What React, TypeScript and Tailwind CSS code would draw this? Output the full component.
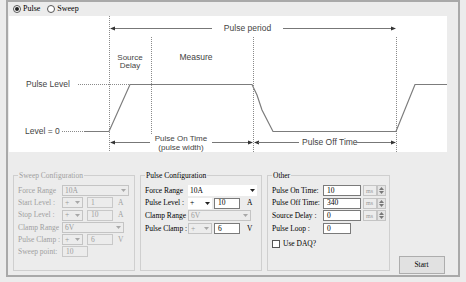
import clsx from 'clsx'

function Arrow({ disabled }: { disabled?: boolean }) {
  return (
    <svg width="5" height="3" viewBox="0 0 5 3" className="shrink-0">
      <polygon points="0,0 5,0 2.5,3" fill={disabled ? '#a8a8a8' : '#222'} />
    </svg>
  )
}

function Combo({ value, className, disabled, flat }: { value: string; className: string; disabled?: boolean; flat?: boolean }) {
  return (
    <div
      className={clsx(
        'h-[11px] flex items-center justify-between pl-[2px] pr-[2px] shrink-0',
        flat ? 'bg-white' : 'border border-[#c4c4c4]',
        disabled ? 'text-[#9a9a9a] bg-[#ececec]' : 'text-[#000]',
        className
      )}
    >
      <span className="leading-none">{value}</span>
      <Arrow disabled={disabled} />
    </div>
  )
}

function Field({ value, className, disabled }: { value: string; className: string; disabled?: boolean }) {
  return (
    <div
      className={clsx(
        'h-[11px] flex items-center pl-[3px] shrink-0 leading-none border',
        disabled ? 'bg-[#ececec] border-[#c8c8c8] text-[#a0a0a0]' : 'bg-white border-[#7a7a7a] text-[#000]',
        className
      )}
    >
      {value}
    </div>
  )
}

function Spinner() {
  return (
    <div className="w-[9px] h-[11px] border border-[#c4c4c4] bg-[#e4e4e4] flex flex-col items-center justify-center gap-[1px] shrink-0">
      <svg width="5" height="3" viewBox="0 0 5 3">
        <polygon points="0,3 5,3 2.5,0" fill="#777" />
      </svg>
      <svg width="5" height="3" viewBox="0 0 5 3">
        <polygon points="0,0 5,0 2.5,3" fill="#777" />
      </svg>
    </div>
  )
}

function Ms() {
  return (
    <div className="w-[14px] h-[11px] border border-[#c4c4c4] bg-[#ececec] text-[#9a9a9a] text-[6px] flex items-center pl-[2px] shrink-0 leading-none">
      ms
    </div>
  )
}

function Diagram() {
  const txt = { fontFamily: "'Liberation Sans', Arial, sans-serif", fontSize: 8.5, fill: '#444' }
  const small = { ...txt, fontSize: 8 }
  const dot = { stroke: '#8a8a8a', strokeWidth: 1, strokeDasharray: '1 1' }
  const wave = '#7c7c7c'
  return (
    <svg width="438" height="136" viewBox="9 16 438 136" className="block">
      <rect x="9" y="16" width="438" height="136" fill="#fff" />
      {/* dotted guides */}
      <line x1="109.5" y1="16" x2="109.5" y2="152" {...dot} />
      <line x1="151.5" y1="37" x2="151.5" y2="134" {...dot} />
      <line x1="253.5" y1="37" x2="253.5" y2="152" {...dot} />
      <line x1="396.5" y1="37" x2="396.5" y2="152" {...dot} />

      {/* pulse period */}
      <line x1="111" y1="28.5" x2="212" y2="28.5" stroke="#777" />
      <line x1="283" y1="28.5" x2="394" y2="28.5" stroke="#777" />
      <polygon points="110,28.5 115,26.5 115,30.5" fill="#333" />
      <polygon points="396,28.5 391,26.5 391,30.5" fill="#333" />
      <text x="247.5" y="31" textAnchor="middle" style={txt}>Pulse period</text>

      <text x="130" y="59.5" textAnchor="middle" style={small}>Source</text>
      <text x="130" y="68" textAnchor="middle" style={small}>Delay</text>
      <text x="196" y="60" textAnchor="middle" style={txt}>Measure</text>

      {/* levels */}
      <text x="26" y="87" style={txt}>Pulse Level</text>
      <line x1="78" y1="84.5" x2="129" y2="84.5" {...dot} />
      <text x="25" y="134" style={txt}>Level = 0</text>
      <line x1="62" y1="131.5" x2="84" y2="131.5" {...dot} />

      {/* waveform */}
      <polyline
        points="84,131.5 109,131.5 130,84.5 252,84.5 257,95 262,110 273,131.5 396,131.5 415,84.5 447,84.5"
        fill="none"
        stroke={wave}
        strokeWidth="1.2"
      />

      {/* pulse on / off */}
      <line x1="111" y1="142.5" x2="150" y2="142.5" stroke="#777" />
      <polygon points="110,142.5 115,140.5 115,144.5" fill="#333" />
      <line x1="212" y1="142.5" x2="250" y2="142.5" stroke="#777" />
      <polygon points="253,142.5 248,140.5 248,144.5" fill="#333" />
      <text x="181" y="140.5" textAnchor="middle" style={small}>Pulse On Time</text>
      <text x="181" y="149.5" textAnchor="middle" style={small}>(pulse width)</text>
      <polygon points="254,142.5 259,140.5 259,144.5" fill="#333" />
      <line x1="258" y1="142.5" x2="299" y2="142.5" stroke="#777" />
      <text x="302" y="145" style={txt}>Pulse Off Time</text>
      <line x1="355" y1="142.5" x2="392" y2="142.5" stroke="#777" />
      <polygon points="396,142.5 391,140.5 391,144.5" fill="#333" />
    </svg>
  )
}

export default function App() {
  return (
    <div className="w-[466px] h-[282px] bg-[#ececec] overflow-hidden font-['Liberation_Serif',serif] text-[7.5px]">
      <div className="ml-[6px] w-[454px] h-[277px] border-2 border-[#a9a9a9] flex flex-col">
        {/* mode */}
        <div className="h-[14px] flex items-center pl-[5px] gap-[7px] text-[8px] text-[#000]">
          <label className="flex items-center gap-[2px]">
            <span className="w-[8px] h-[8px] rounded-full border border-[#555] bg-white flex items-center justify-center">
              <span className="w-[4px] h-[4px] rounded-full bg-[#222]" />
            </span>
            Pulse
          </label>
          <label className="flex items-center gap-[2px]">
            <span className="w-[8px] h-[8px] rounded-full border border-[#555] bg-white" />
            Sweep
          </label>
        </div>

        <div className="ml-[1px]">
          <Diagram />
        </div>

        <div className="flex flex-1 pl-[5px] gap-[5px] pt-[19px] whitespace-nowrap">
          {/* sweep */}
          <fieldset className="w-[122px] h-[100px] border border-[#cfcfcf] pl-[4px] text-[#a0a0a0]">
            <legend className="px-[1px] leading-[9px]">Sweep Configuration</legend>
            <div className="flex flex-col gap-[1.3px] mt-[5px]">
              <div className="flex items-center h-[11px]">
                <span className="w-[44px]">Force Range</span>
                <Combo value="10A" className="w-[67px]" disabled />
              </div>
              <div className="flex items-center h-[11px]">
                <span className="w-[44px]">Start Level :</span>
                <Combo value="+" className="w-[21px]" disabled />
                <Field value="1" className="w-[26px] ml-[4px]" disabled />
                <span className="ml-[5px]">A</span>
              </div>
              <div className="flex items-center h-[11px]">
                <span className="w-[44px]">Stop Level :</span>
                <Combo value="+" className="w-[21px]" disabled />
                <Field value="10" className="w-[26px] ml-[4px]" disabled />
                <span className="ml-[5px]">A</span>
              </div>
              <div className="flex items-center h-[11px]">
                <span className="w-[44px]">Clamp Range</span>
                <Combo value="6V" className="w-[62px]" disabled />
              </div>
              <div className="flex items-center h-[11px]">
                <span className="w-[44px]">Pulse Clamp :</span>
                <Combo value="+" className="w-[21px]" disabled />
                <Field value="6" className="w-[26px] ml-[4px]" disabled />
                <span className="ml-[5px]">V</span>
              </div>
              <div className="flex items-center h-[11px]">
                <span className="w-[44px]">Sweep point:</span>
                <Field value="10" className="w-[26px]" disabled />
              </div>
            </div>
          </fieldset>

          {/* pulse */}
          <fieldset className="w-[122px] h-[100px] border border-[#cfcfcf] pl-[4px] text-[#000]">
            <legend className="px-[1px] leading-[9px]">Pulse Configuration</legend>
            <div className="flex flex-col gap-[1.6px] mt-[5px]">
              <div className="flex items-center h-[11px]">
                <span className="w-[43px]">Force Range</span>
                <Combo value="10A" className="w-[69px]" flat />
              </div>
              <div className="flex items-center h-[11px]">
                <span className="w-[43px]">Pulse Level :</span>
                <Combo value="+" className="w-[24px]" flat />
                <Field value="10" className="w-[26px] ml-[2px]" />
                <span className="ml-[7px]">A</span>
              </div>
              <div className="flex items-center h-[11px]">
                <span className="w-[43px]">Clamp Range</span>
                <Combo value="6V" className="w-[63px]" disabled />
              </div>
              <div className="flex items-center h-[11px]">
                <span className="w-[43px]">Pulse Clamp :</span>
                <Combo value="+" className="w-[24px]" disabled />
                <Field value="6" className="w-[26px] ml-[2px]" />
                <span className="ml-[7px]">V</span>
              </div>
            </div>
          </fieldset>

          {/* other */}
          <fieldset className="w-[123px] h-[100px] border border-[#cfcfcf] pl-[4px] text-[#000]">
            <legend className="px-[1px] leading-[9px]">Other</legend>
            <div className="flex flex-col gap-[1.6px] mt-[5px]">
              <div className="flex items-center h-[11px]">
                <span className="w-[51px]">Pulse On Time:</span>
                <Field value="10" className="w-[38px]" />
                <div className="ml-[2px] flex"><Ms /><Spinner /></div>
              </div>
              <div className="flex items-center h-[11px]">
                <span className="w-[51px]">Pulse Off Time:</span>
                <Field value="340" className="w-[38px]" />
                <div className="ml-[2px] flex"><Ms /><Spinner /></div>
              </div>
              <div className="flex items-center h-[11px]">
                <span className="w-[51px]">Source Delay :</span>
                <Field value="0" className="w-[38px]" />
                <div className="ml-[2px] flex"><Ms /><Spinner /></div>
              </div>
              <div className="flex items-center h-[11px]">
                <span className="w-[51px]">Pulse Loop :</span>
                <Field value="0" className="w-[28px]" />
              </div>
              <div className="flex items-center h-[11px] mt-[3px] gap-[3px]">
                <span className="w-[8px] h-[8px] border border-[#555] bg-white" />
                Use DAQ?
              </div>
            </div>
          </fieldset>

          <div className="flex-1 flex items-end justify-center pb-[1px]">
            <button className="w-[46px] h-[18px] border border-[#adadad] bg-[#e1e1e1] text-[#000] text-[7.5px] mr-[10px]">
              Start
            </button>
          </div>
        </div>
      </div>
    </div>
  )
}
